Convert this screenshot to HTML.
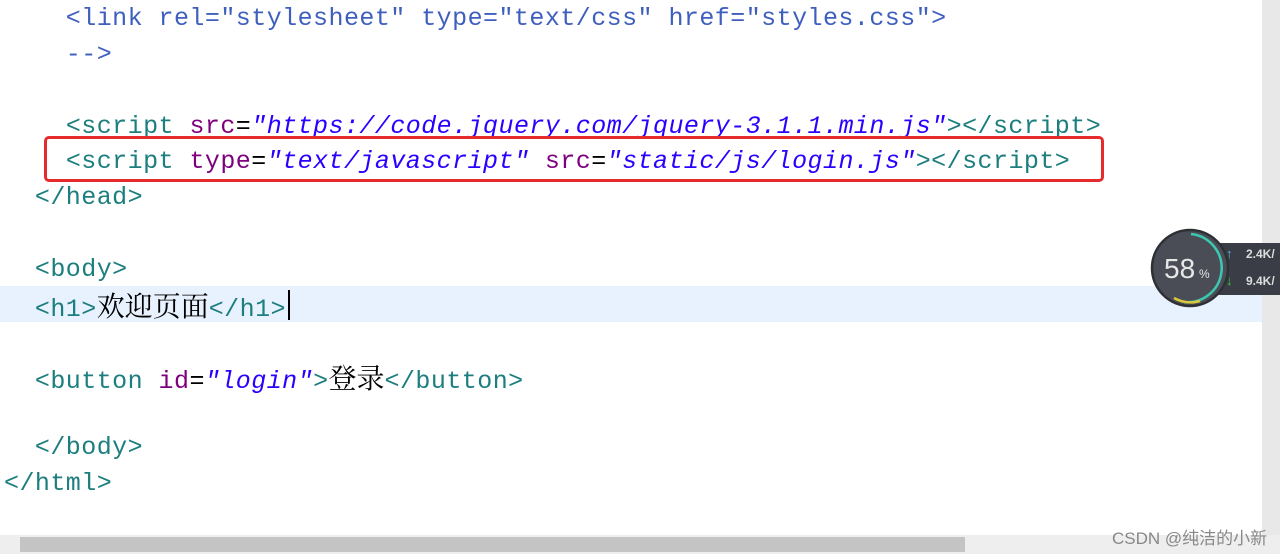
<!DOCTYPE html>
<html><head><meta charset="utf-8"><style>
body{margin:0;width:1280px;height:554px;background:#fff;overflow:hidden;position:relative;font-family:"Liberation Mono","Noto Sans CJK SC",monospace;}
.l{position:absolute;left:4px;height:36px;line-height:36px;font-size:25px;letter-spacing:0.45px;white-space:pre;}
.t{color:#1c7e7e}.a{color:#7f007f}.s{color:#2a00ff;font-style:italic}.c{color:#3f5fbf}.k{color:#000}
.cj{font-family:"Noto Serif CJK SC","Noto Sans CJK SC",serif;color:#000;letter-spacing:0;font-size:28px}
</style></head><body>
<div style="position:absolute;left:0;top:286px;width:1262px;height:36px;background:#e8f2fe"></div>
<div class="l" style="top:1px"><span class="c">    &lt;link rel="stylesheet" type="text/css" href="styles.css"&gt;</span></div>
<div class="l" style="top:37px"><span class="c">    --&gt;</span></div>
<div class="l" style="top:109px">    <span class="t">&lt;script</span> <span class="a">src</span>=<span class="s">"https://code.jquery.com/jquery-3.1.1.min.js"</span><span class="t">&gt;&lt;/script&gt;</span></div>
<div class="l" style="top:144px">    <span class="t">&lt;script</span> <span class="a">type</span>=<span class="s">"text/javascript"</span> <span class="a">src</span>=<span class="s">"static/js/login.js"</span><span class="t">&gt;&lt;/script&gt;</span></div>
<div class="l" style="top:180px">  <span class="t">&lt;/head&gt;</span></div>
<div class="l" style="top:252px">  <span class="t">&lt;body&gt;</span></div>
<div class="l" style="top:287px">  <span class="t">&lt;h1&gt;</span><span class="cj">欢迎页面</span><span class="t">&lt;/h1&gt;</span></div>
<div style="position:absolute;left:288px;top:290px;width:2px;height:30px;background:#000"></div>
<div class="l" style="top:359px">  <span class="t">&lt;button</span> <span class="a">id</span>=<span class="s">"login"</span><span class="t">&gt;</span><span class="cj">登录</span><span class="t">&lt;/button&gt;</span></div>
<div class="l" style="top:430px">  <span class="t">&lt;/body&gt;</span></div>
<div class="l" style="top:466px"><span class="t">&lt;/html&gt;</span></div>
<div style="position:absolute;left:44px;top:136px;width:1054px;height:40px;border:3px solid #e52b2b;border-radius:5px"></div>
<div style="position:absolute;left:1262px;top:0;width:18px;height:535px;background:#e8e8e8"></div>
<div style="position:absolute;left:0;top:535px;width:1280px;height:19px;background:#eeeeee"></div>
<div style="position:absolute;left:20px;top:537px;width:945px;height:15px;background:#c4c4c4"></div>
<div style="position:absolute;left:1112px;top:524px;font-family:'Liberation Sans','Noto Sans CJK SC',sans-serif;font-size:17px;color:#888">CSDN @纯洁的小新</div>
<div style="position:absolute;left:1212px;top:243px;width:80px;height:52px;background:#3a3d45;border-radius:8px"></div>
<div style="position:absolute;left:1226px;top:246px;color:#5ab0e8;font-size:13px;font-weight:bold;font-family:'Liberation Sans',sans-serif">↑</div>
<div style="position:absolute;left:1226px;top:273px;color:#3c3;font-size:13px;font-weight:bold;font-family:'Liberation Sans',sans-serif">↓</div>
<div style="position:absolute;left:1246px;top:247px;color:#ddd;font-size:12px;font-weight:bold;font-family:'Liberation Sans',sans-serif">2.4K/</div>
<div style="position:absolute;left:1246px;top:274px;color:#ddd;font-size:12px;font-weight:bold;font-family:'Liberation Sans',sans-serif">9.4K/</div>
<svg style="position:absolute;left:1150px;top:228px" width="80" height="80"><circle cx="40" cy="40" r="38" fill="#4a4d56" stroke="#2e3036" stroke-width="2.5"/><path d="M41 6 A34 34 0 0 1 34 74" fill="none" stroke="#3cc8b0" stroke-width="2.5"/><path d="M50 73 A34 34 0 0 1 24 70" fill="none" stroke="#d8c83c" stroke-width="2.5"/><text x="14" y="50" fill="#e8e8e8" font-family="Liberation Sans" font-size="28">58</text><text x="49" y="50" fill="#e8e8e8" font-family="Liberation Sans" font-size="12">%</text></svg>
</body></html>
